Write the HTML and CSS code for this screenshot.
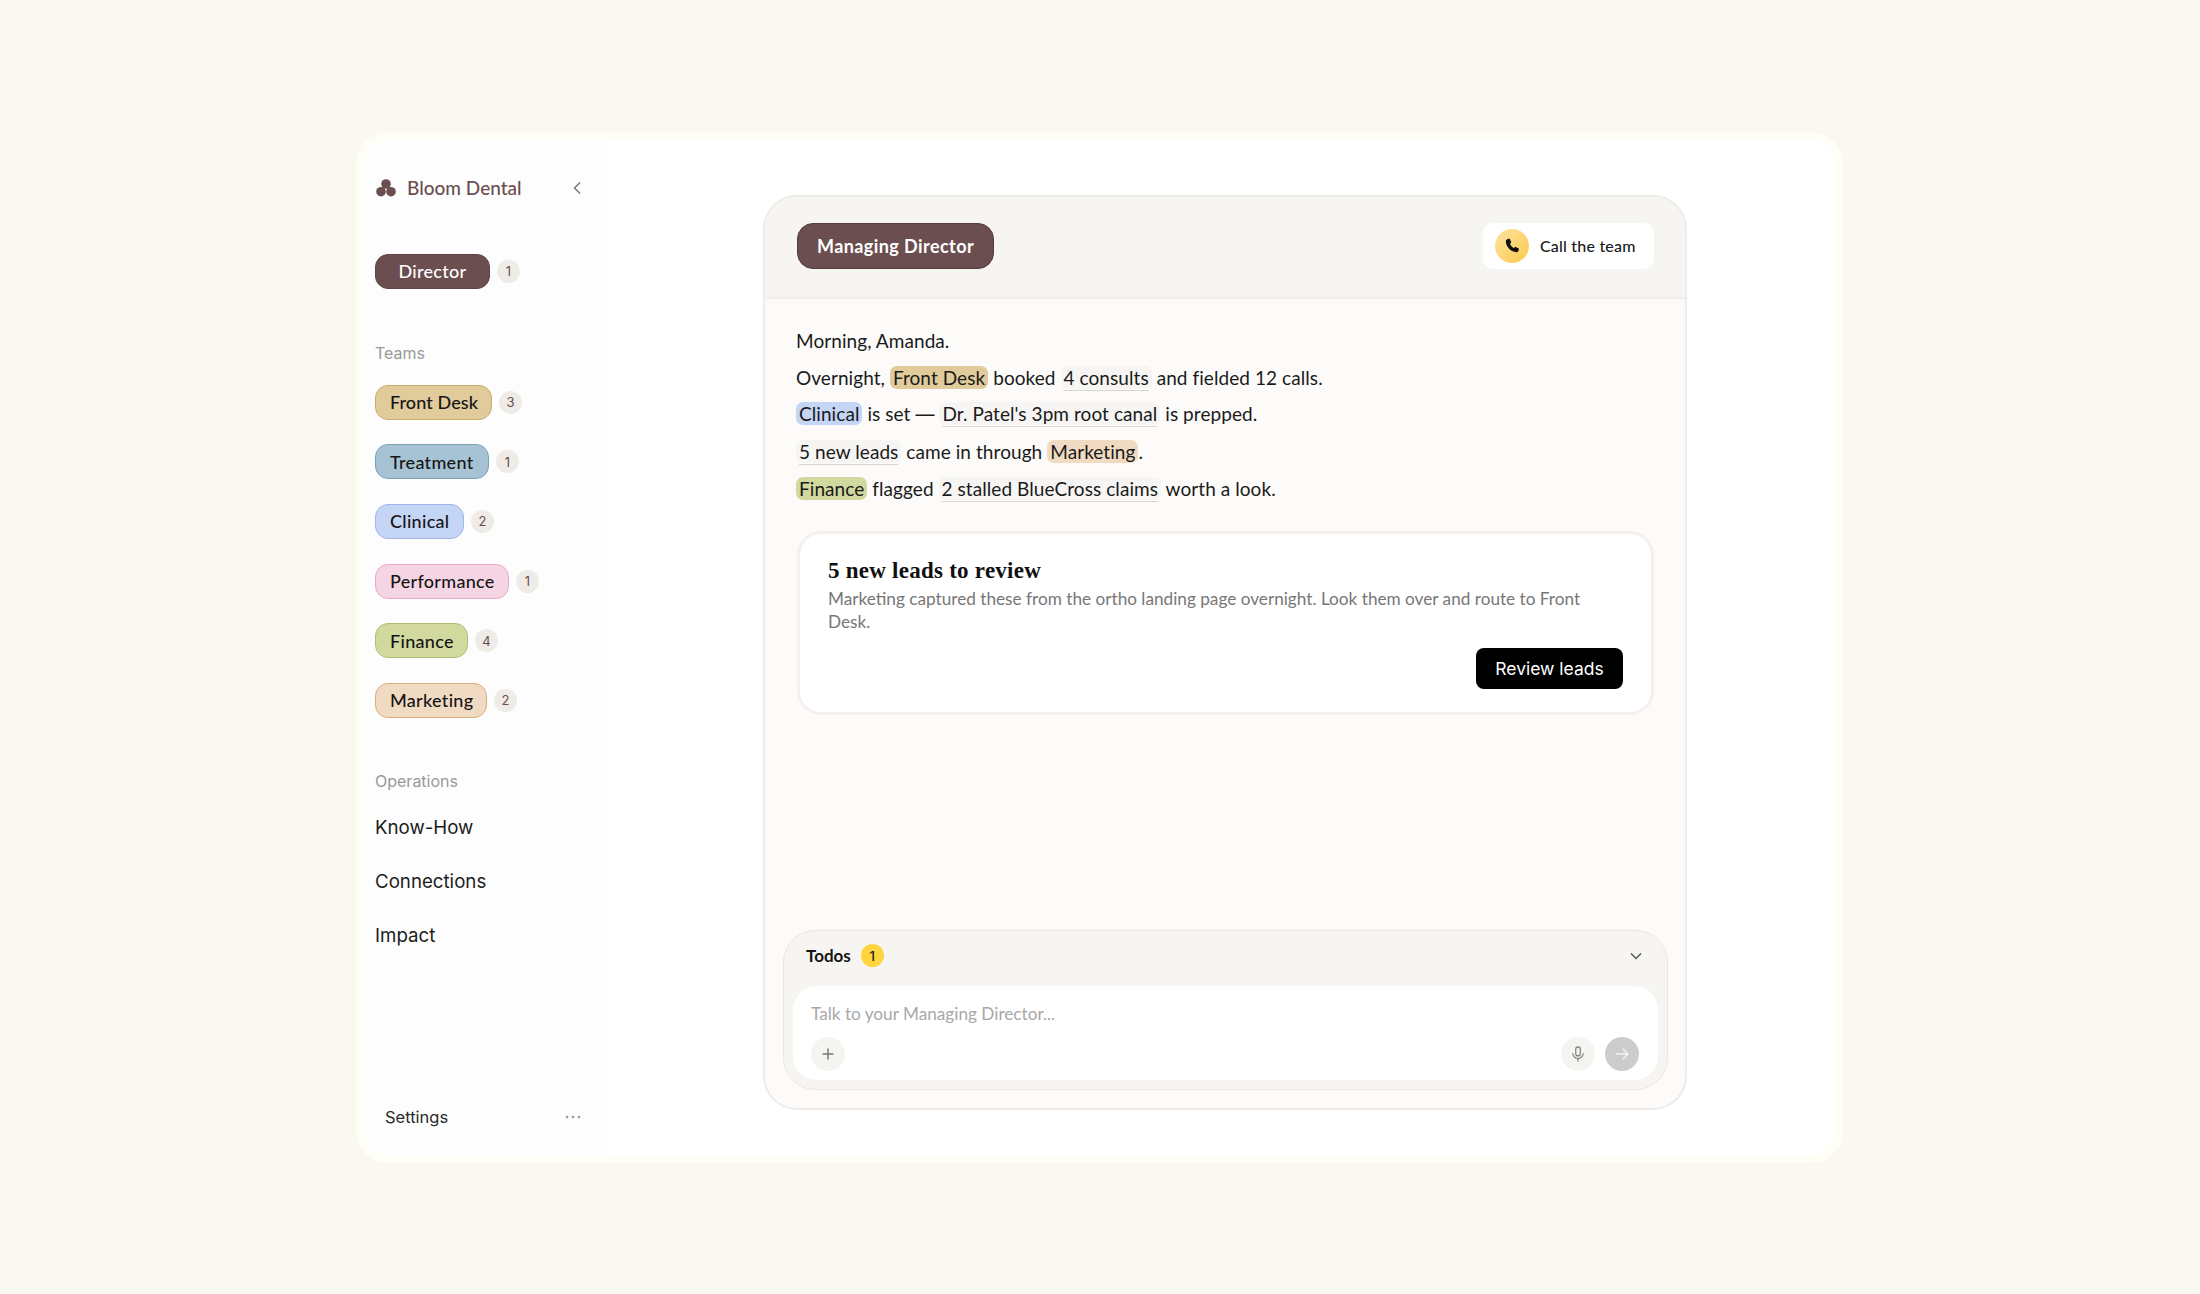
FILE: index.html
```html
<!DOCTYPE html>
<html lang="en">
<head>
<meta charset="utf-8">
<title>Bloom Dental</title>
<link rel="stylesheet" href="styles.css">
</head>
<body>
<div class="frame">
  <aside class="sidebar">
    <div class="brand">
      <svg class="logo" viewBox="0 0 20 18" width="20" height="18"><circle cx="10" cy="5" r="4.8"/><circle cx="5" cy="12.7" r="4.8"/><circle cx="15" cy="12.7" r="4.8"/></svg>
      <span class="brand-name">Bloom Dental</span>
      <svg class="collapse" viewBox="0 0 10 14" width="10" height="14"><path d="M8 1.5 2.5 7 8 12.5"/></svg>
    </div>
    <div class="row director-row"><span class="pill director">Director</span><span class="count">1</span></div>
    <div class="label teams-label">Teams</div>
    <div class="teams">
      <div class="row"><span class="pill frontdesk">Front Desk</span><span class="count">3</span></div>
      <div class="row"><span class="pill treatment">Treatment</span><span class="count">1</span></div>
      <div class="row"><span class="pill clinical">Clinical</span><span class="count">2</span></div>
      <div class="row"><span class="pill performance">Performance</span><span class="count">1</span></div>
      <div class="row"><span class="pill finance">Finance</span><span class="count">4</span></div>
      <div class="row"><span class="pill marketing">Marketing</span><span class="count">2</span></div>
    </div>
    <div class="label ops-label">Operations</div>
    <nav class="ops">
      <a>Know-How</a>
      <a>Connections</a>
      <a>Impact</a>
    </nav>
    <div class="settings"><span>Settings</span><svg viewBox="0 0 16 4" width="16" height="4"><circle cx="2" cy="2" r="1.3"/><circle cx="8" cy="2" r="1.3"/><circle cx="14" cy="2" r="1.3"/></svg></div>
  </aside>
  <main class="main">
    <section class="panel">
      <header class="panel-head">
        <span class="title-pill">Managing Director</span>
        <button class="call"><span class="call-icon"><svg viewBox="0 0 24 24" width="18" height="18"><path d="M6.6 2.8 9 2.2l2.200 5-1.900 1.700c.9 2.300 2.800 4.400 5.300 5.800l2-1.800 4.700 2.600-.7 2.800c-.3 1.300-1.500 2.200-2.800 2C10 19.300 4.100 13 3.800 6c-.1-1.500 1.200-2.800 2.800-3.200Z"/></svg></span>Call the team</button>
      </header>
      <div class="panel-body">
        <div class="message">
          <p>Morning, Amanda.</p>
          <p>Overnight, <span class="hl h-frontdesk">Front Desk</span> booked <span class="fact">4 consults</span> and fielded 12 calls.</p>
          <p><span class="hl h-clinical">Clinical</span> is set <span class="dash">—</span> <span class="fact">Dr. Patel's 3pm root canal</span> is prepped.</p>
          <p><span class="fact">5 new leads</span> came in through <span class="hl h-marketing">Marketing</span>.</p>
          <p><span class="hl h-finance">Finance</span> flagged <span class="fact">2 stalled BlueCross claims</span> worth a look.</p>
        </div>
        <article class="card">
          <h2>5 new leads to review</h2>
          <p>Marketing captured these from the ortho landing page overnight. Look them over and route to Front Desk.</p>
          <div class="card-actions"><button class="review">Review leads</button></div>
        </article>
        <div class="composer">
          <div class="todos">
            <span class="todos-title">Todos</span><span class="todos-count">1</span>
            <svg class="todos-chev" viewBox="0 0 12 8" width="12" height="8"><path d="M1 1.500 6 6.500l5-5"/></svg>
          </div>
          <div class="input">
            <div class="placeholder">Talk to your Managing Director...</div>
            <div class="tools">
              <span class="tool"><svg viewBox="0 0 14 14" width="14" height="14"><path d="M7 1.500v11M1.500 7h11"/></svg></span>
              <span class="tool mic"><svg viewBox="0 0 24 24" width="18" height="18"><rect x="9" y="2.500" width="6" height="12" rx="3"/><path d="M5 11a7 7 0 0 0 14 0M12 18v4"/></svg></span>
              <span class="tool send"><svg viewBox="0 0 24 24" width="18" height="18"><path d="M4 12h16M13 5l7 7-7 7"/></svg></span>
            </div>
          </div>
        </div>
      </div>
    </section>
  </main>
</div>
</body>
</html>
```
FILE: styles.css
```css
* { box-sizing: border-box; }
html, body { height: 100%; }
body {
  margin: 0;
  padding-right: 1px;
  background: #f9f8f1;
  display: flex;
  align-items: center;
  justify-content: center;
  font-family: "Lato", "Noto Sans", sans-serif;
  color: #1a1a1a;
}
p, h2 { margin: 0; }
button { font: inherit; border: 0; }

.frame {
  width: 1487px;
  height: 1031px;
  border: 8px solid #fefdf6;
  border-radius: 32px;
  background: #fff;
  display: flex;
  overflow: hidden;
}

.sidebar {
  width: 245px;
  flex: none;
  background: #fdfdfd;
  padding: 0 0 0 11px;
  display: flex;
  flex-direction: column;
}
.brand {
  height: 28px;
  margin-top: 34px;
  display: flex;
  align-items: center;
  color: #6b4e50;
}
.logo { fill: #6b4e50; margin-left: 1px; flex: none; }
.brand-name { margin-left: 11px; font-size: 19px; font-weight: 500; }
.collapse { margin-left: 50px; fill: none; stroke: #777; stroke-width: 1.500; }

.row { display: flex; align-items: center; gap: 7px; }
.director-row { margin-top: 52px; }
.pill {
  height: 35px;
  padding: 0 14px;
  border: 1.500px solid;
  border-radius: 13px;
  display: inline-flex;
  align-items: center;
  font-size: 18px;
  font-weight: 500;
  letter-spacing: .3px;
  white-space: nowrap;
  color: #151515;
}
.director { width: 115px; justify-content: center; background: #6b4e50; border-color: #5c4345; color: #fff; }
.frontdesk { width: 117px; letter-spacing: .1px; background: #e2cb9b; border-color: #c9ac6c; }
.treatment { width: 114px; background: #a6c3d4; border-color: #7ba0b5; }
.clinical { width: 89px; background: #c5d5f5; border-color: #9db7ea; }
.performance { width: 134px; background: #f5d5e3; border-color: #e8aac6; }
.finance { width: 93px; background: #d2d99e; border-color: #b2bd72; }
.marketing { width: 112px; background: #f0dac2; border-color: #d9ad80; }
.count {
  width: 23px;
  height: 23px;
  border-radius: 50%;
  background: #efece7;
  color: #6b4e50;
  font-size: 13px;
  font-family: "Inter", sans-serif;
  display: flex;
  align-items: center;
  justify-content: center;
}
.label { font-family: "Inter", sans-serif; font-size: 16px; color: #999; line-height: 20px; }
.teams-label { margin-top: 54px; }
.teams { margin-top: 22px; display: flex; flex-direction: column; gap: 24.700px; }
.ops-label { margin-top: 53px; }
.ops { margin-top: 10px; display: flex; flex-direction: column; }
.ops a { font-family: "Inter", sans-serif; font-size: 18.700px; line-height: 54px; color: #1c1c1c; }
.settings {
  margin-top: auto;
  margin-bottom: 28px;
  padding: 0 28px 0 10px;
  display: flex;
  align-items: center;
  justify-content: space-between;
  font-family: "Inter", sans-serif;
  font-size: 16.500px;
  line-height: 20px;
  color: #2a2a2a;
}
.settings svg { fill: #999; }

.main { flex: 1; padding: 55px 0 45px 154px; display: flex; }
.panel {
  width: 924px;
  border: 2px solid #efebe9;
  border-radius: 34px;
  background: #fcfbf9;
  display: flex;
  flex-direction: column;
  overflow: hidden;
}
.panel-head {
  height: 102px;
  flex: none;
  padding: 26px 31px 0 32px;
  background: #f7f5f2;
  border-bottom: 2px solid #f0ecea;
  display: flex;
  justify-content: space-between;
  align-items: flex-start;
}
.title-pill {
  height: 46px;
  width: 197px;
  justify-content: center;
  background: #6b4e50;
  border: 1.500px solid #553d3f;
  border-radius: 16px;
  color: #fff;
  font-size: 18px;
  font-weight: 700;
  letter-spacing: .43px;
  white-space: nowrap;
  display: flex;
  align-items: center;
}
.call {
  height: 46px;
  width: 171px;
  padding: 0 0 0 12px;
  background: #fff;
  border-radius: 10px;
  display: flex;
  align-items: center;
  gap: 11px;
  font-size: 16px;
  font-weight: 500;
  letter-spacing: .2px;
  color: #1a1a1a;
}
.call-icon {
  width: 34px;
  height: 34px;
  border-radius: 50%;
  background: linear-gradient(135deg, #fde3a0, #fcc94f);
  display: flex;
  align-items: center;
  justify-content: center;
}
.call-icon svg { fill: #111; }

.panel-body { flex: 1; padding: 24.500px 17px 18px 18px; display: flex; flex-direction: column; min-height: 0; }
.message { padding-left: 13px; font-size: 19px; letter-spacing: .07px; line-height: 36.700px; color: #1a1a1a; }
.dash { font-family: "Inter", sans-serif; }
.hl, .fact { display: inline-block; line-height: 23px; padding: 0 3px; border-radius: 7px; }
.fact {
  background: #f6f5f3;
  text-decoration: underline;
  text-decoration-color: #d9d6d2;
  text-decoration-thickness: 1px;
  text-underline-offset: 5px;
  text-decoration-skip-ink: none;
}
.h-frontdesk { background: #e2cb9b; }
.h-clinical { background: #c5d5f5; }
.h-marketing { background: #f0dac2; }
.h-finance { background: #d2d99e; }

.card {
  height: 184px;
  width: 857px;
  margin: 23px 0 0 14px;
  padding: 23px 28px 0 28px;
  background: #fff;
  border: 3px solid #f5efed;
  border-radius: 24px;
}
.card h2 { font-family: "Liberation Serif", serif; font-size: 23px; font-weight: 700; letter-spacing: .25px; line-height: 28px; color: #111; }
.card p { font-size: 17.200px; line-height: 23px; color: #777; margin-top: 2px; padding-right: 8px; }
.card-actions { display: flex; justify-content: flex-end; margin-top: 15px; }
.review {
  width: 147px;
  height: 41px;
  border-radius: 8px;
  background: #000;
  color: #fff;
  font-family: "Inter", sans-serif;
  font-size: 17.500px;
}

.composer {
  margin-top: auto;
  height: 160px;
  border: 1.500px solid #ece6e3;
  border-radius: 32px;
  background: #f7f5f2;
  padding: 0 9px 9px;
  display: flex;
  flex-direction: column;
}
.todos { height: 55px; flex: none; display: flex; align-items: center; padding: 0 16px 5px 13px; }
.todos-title { font-size: 17px; font-weight: 700; color: #151515; }
.todos-count {
  margin-left: 10px;
  width: 23px;
  height: 23px;
  border-radius: 50%;
  background: #ffd53d;
  font-family: "Inter", sans-serif;
  font-size: 13px;
  font-weight: 500;
  display: flex;
  align-items: center;
  justify-content: center;
}
.todos-chev { margin-left: auto; fill: none; stroke: #555; stroke-width: 1.500; }
.input { flex: 1; background: #fff; border-radius: 24px; padding: 17px 19px 9px 18px; display: flex; flex-direction: column; }
.placeholder { font-size: 17.200px; line-height: 22px; color: #a8a8a8; }
.tools { margin-top: auto; display: flex; gap: 10px; }
.tool {
  width: 34px;
  height: 34px;
  border-radius: 50%;
  background: #f5f4f1;
  display: flex;
  align-items: center;
  justify-content: center;
}
.tool svg { fill: none; stroke: #777; stroke-width: 1.500; }
.mic { margin-left: auto; }
.send { background: #ccc; }
.send svg { stroke: #f4f4f4; stroke-width: 1.800; }
```
